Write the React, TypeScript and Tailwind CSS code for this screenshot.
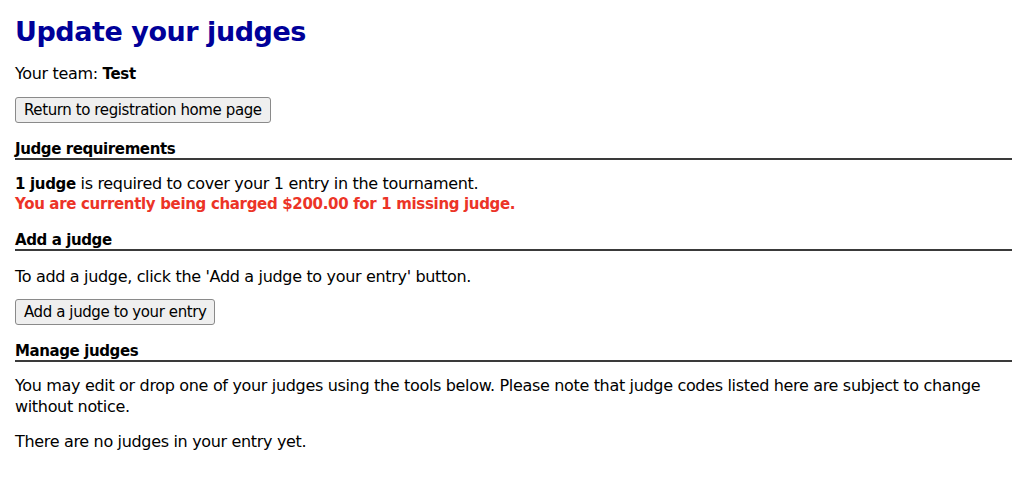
import React from "react";

function Section({ title, mt }: { title: string; mt: string }) {
  return (
    <div className={`${mt} border-b-2 border-[#3a3a3a]`}>
      <h2 className="text-[15px] leading-[18px] font-bold text-black tracking-[-0.4px]">{title}</h2>
    </div>
  );
}

function Btn({ children, mt }: { children: React.ReactNode; mt: string }) {
  return (
    <button
      className={`${mt} h-[26px] px-[8px] bg-[#efefef] border border-[#8a8a8a] rounded-[3px] text-[15px] leading-[19px] tracking-[-0.4px] text-black`}
    >
      {children}
    </button>
  );
}

export default function App() {
  return (
    <div
      className="min-h-[477px] bg-white pl-[15px] pr-[12px] pt-[14px] text-black text-[16px] leading-[21px] tracking-[-0.33px]"
      style={{ fontFamily: "'DejaVu Sans', Verdana, sans-serif" }}
    >
      <h1 className="text-[27px] leading-[36px] font-bold text-[#000099] tracking-[-0.45px]">Update your judges</h1>
      <p className="mt-[13px] h-[21px]">
        Your team: <b className="text-[15px] tracking-[-0.33px]">Test</b>
      </p>
      <Btn mt="mt-[13px]">Return to registration home page</Btn>
      <Section title="Judge requirements" mt="mt-[17px]" />
      <p className="mt-[13px] h-[21px]">
        <b className="text-[15px] tracking-[-0.33px]">1 judge</b> is required to cover your 1 entry in the tournament.
      </p>
      <p className="h-[21px] font-bold text-[15px] tracking-[-0.33px] text-[#ec3427]">
        You are currently being charged $200.00 for 1 missing judge.
      </p>
      <Section title="Add a judge" mt="mt-[16px]" />
      <p className="mt-[15px]">To add a judge, click the 'Add a judge to your entry' button.</p>
      <Btn mt="mt-[12px]">Add a judge to your entry</Btn>
      <Section title="Manage judges" mt="mt-[17px]" />
      <p className="mt-[13px] pr-[20px]">
        You may edit or drop one of your judges using the tools below. Please note that judge codes listed here are
        subject to change without notice.
      </p>
      <p className="mt-[14px]">There are no judges in your entry yet.</p>
    </div>
  );
}
